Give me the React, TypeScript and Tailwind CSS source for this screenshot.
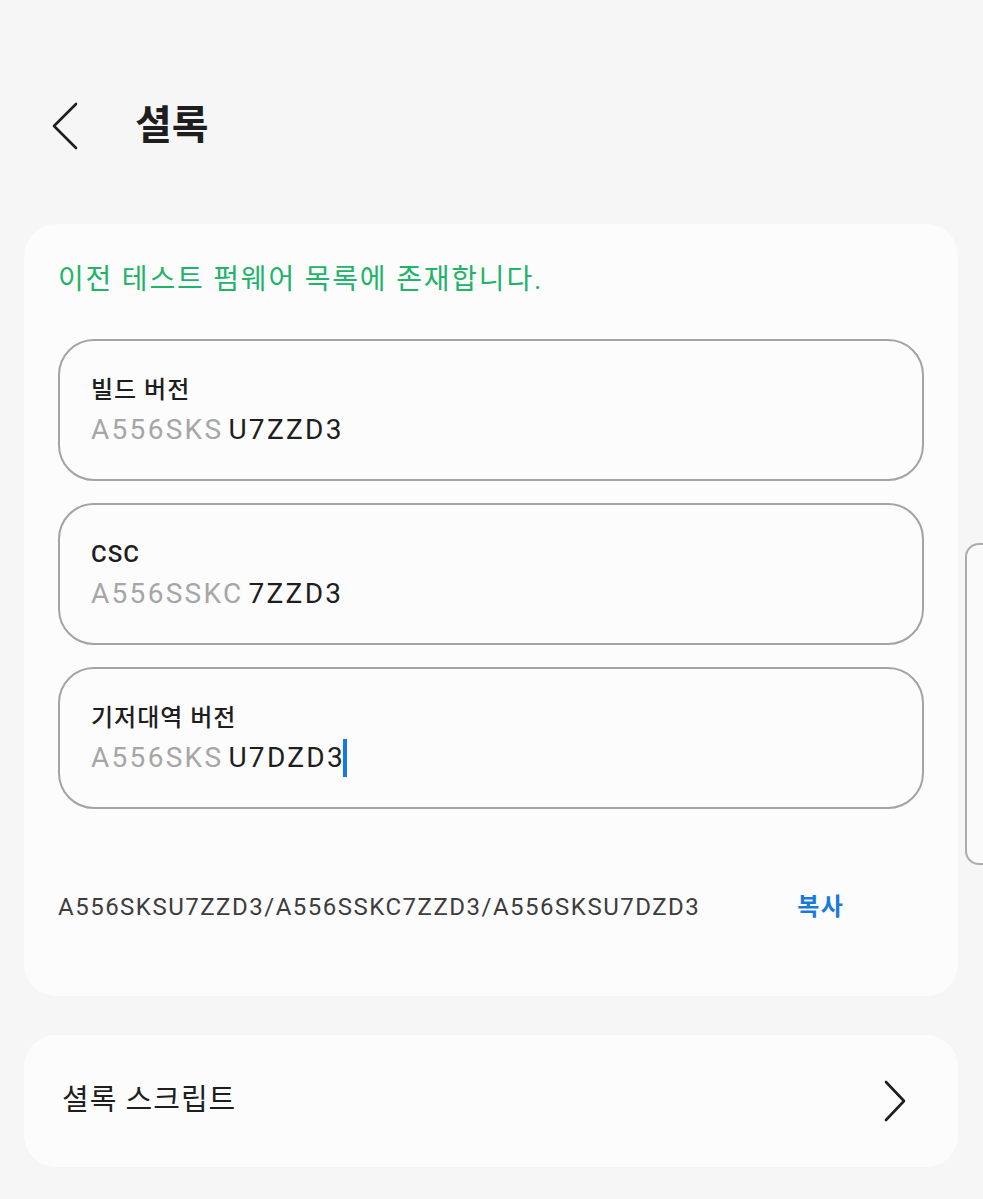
const font = { fontFamily: 'Roboto, "Noto Sans CJK KR", sans-serif' };

interface FieldProps {
  label: string;
  prefix: string;
  value: string;
  focused?: boolean;
}

function Field({ label, prefix, value, focused }: FieldProps) {
  return (
    <div className="h-[142px] rounded-[36px] border-2 border-[#a3a3a3] pl-[31px] pt-[33px]">
      <div className="text-[24px] leading-[32px] tracking-[1px] text-[#1e1e1e] font-medium">{label}</div>
      <div className="mt-[3px] flex items-center text-[28px] leading-[42px] tracking-[2.3px]">
        <span className="text-[#a6a6a6]">{prefix}</span>
        <span className="ml-[5px] text-[#1e1e1e]">{value}</span>
        {focused && <span className="-ml-[2px] inline-block h-[38px] w-[4px] bg-[#1479e6]" />}
      </div>
    </div>
  );
}

export default function App() {
  return (
    <div className="relative min-h-[1199px] w-[983px] overflow-hidden bg-[#f6f6f6]" style={font}>
      {/* Header */}
      <div className="flex h-[224px] items-start pt-[102px]">
        <div className="flex items-center">
          <svg width="28" height="48" viewBox="0 0 28 48" className="ml-[51px]" fill="none">
            <polyline points="25,2 3,24 25,46" stroke="#1e1e1e" strokeWidth="2.6" strokeLinecap="round" strokeLinejoin="round" />
          </svg>
          <h1 className="ml-[56px] text-[40px] leading-[48px] font-bold text-[#1e1e1e]">셜록</h1>
        </div>
      </div>

      {/* Main card */}
      <div className="absolute left-[24px] top-[224px] w-[934px] rounded-[32px] bg-[#fcfcfc] px-[34px] pb-[73px] pt-[38px]">
        <p className="text-[28px] leading-[36px] tracking-[1.8px] text-[#22b36a]">이전 테스트 펌웨어 목록에 존재합니다.</p>
        <div className="mt-[41px] flex flex-col gap-[22px]">
          <Field label="빌드 버전" prefix="A556SKS" value="U7ZZD3" />
          <Field label="CSC" prefix="A556SSKC" value="7ZZD3" />
          <Field label="기저대역 버전" prefix="A556SKS" value="U7DZD3" focused />
        </div>
        <div className="mt-[82px] flex items-center text-[24px] leading-[32px] tracking-[1.5px]">
          <span className="text-[#3d3d3d]">A556SKSU7ZZD3/A556SSKC7ZZD3/A556SKSU7DZD3</span>
          <span className="ml-[97px] font-bold text-[#1979dd]">복사</span>
        </div>
      </div>

      {/* Second card */}
      <div className="absolute left-[24px] top-[1035px] flex h-[132px] w-[934px] items-center justify-between rounded-[32px] bg-[#fcfcfc] pl-[38px] pr-[51px]">
        <span className="text-[29px] tracking-[1px] text-[#1e1e1e]">셜록 스크립트</span>
        <svg width="24" height="42" viewBox="0 0 24 42" fill="none">
          <polyline points="3,2 21,21 3,40" stroke="#1e1e1e" strokeWidth="2.6" strokeLinecap="round" strokeLinejoin="round" />
        </svg>
      </div>

      {/* Side panel peeking from the right */}
      <div className="absolute left-[965px] top-[543px] h-[322px] w-[60px] rounded-[14px] border-2 border-[#ababab] bg-[#fafafa]" />
    </div>
  );
}
